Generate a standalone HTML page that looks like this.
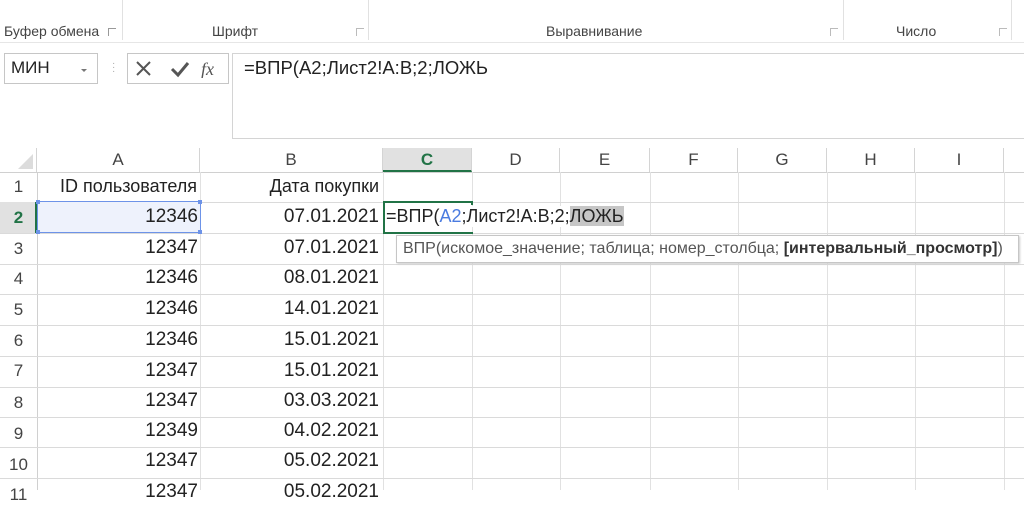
<!DOCTYPE html>
<html><head><meta charset="utf-8"><style>
body{margin:0;width:1024px;height:490px;overflow:hidden;background:#fff;font-family:"Segoe UI","Liberation Sans",sans-serif;position:relative}
.a{position:absolute}
.rib{color:#444;font-size:14px;top:23px}
.vl{position:absolute;width:1px;background:#e1e1e1}
.hl{position:absolute;height:1px;background:#dadada}
.ch{position:absolute;top:148px;height:24px;line-height:24px;text-align:center;font-size:17px;color:#444;border-right:1px solid #d4d4d4;box-sizing:border-box;background:#fff}
.rh{position:absolute;left:0;width:37px;text-align:center;font-size:17px;color:#444}
.c{position:absolute;font-size:19px;color:#222;text-align:right;white-space:nowrap}
</style></head><body>
<div class="a rib" style="left:4px">Буфер обмена</div>
<div class="a" style="left:108px;top:28px;width:7px;height:7px;border-left:1px solid #999;border-top:1px solid #999"></div>
<div class="vl" style="left:122px;top:0;height:40px"></div>
<div class="a rib" style="left:212px">Шрифт</div>
<div class="a" style="left:356px;top:28px;width:7px;height:7px;border-left:1px solid #bbb;border-top:1px solid #bbb"></div>
<div class="vl" style="left:368px;top:0;height:40px"></div>
<div class="a rib" style="left:546px">Выравнивание</div>
<div class="a" style="left:830px;top:28px;width:7px;height:7px;border-left:1px solid #bbb;border-top:1px solid #bbb"></div>
<div class="vl" style="left:843px;top:0;height:40px"></div>
<div class="a rib" style="left:896px">Число</div>
<div class="a" style="left:999px;top:28px;width:7px;height:7px;border-left:1px solid #bbb;border-top:1px solid #bbb"></div>
<div class="vl" style="left:1011px;top:0;height:40px"></div>
<div class="hl" style="left:0;top:42px;width:1024px;background:#e6e6e6"></div>
<div class="a" style="left:4px;top:53px;width:94px;height:31px;border:1px solid #c6c6c6;box-sizing:border-box"></div>
<div class="a" style="left:11px;top:58px;font-size:17px;color:#222">МИН</div>
<div class="a" style="left:81px;top:69px;border-left:3px solid transparent;border-right:3px solid transparent;border-top:3px solid #777"></div>
<div class="a" style="left:112px;top:62px;color:#aaa;font-size:10px;line-height:4px">·<br>·<br>·</div>
<div class="a" style="left:127px;top:53px;width:102px;height:31px;border:1px solid #c6c6c6;box-sizing:border-box"></div>
<svg class="a" style="left:135px;top:60px" width="90" height="18">
<path d="M2 2L15 15M15 2L2 15" stroke="#555" stroke-width="2"/>
<path d="M37 9L43 15L53 3" stroke="#555" stroke-width="3" fill="none"/>
<text x="66" y="15" font-family="Liberation Serif,serif" font-style="italic" font-size="18" fill="#555">fx</text>
</svg>
<div class="a" style="left:232px;top:53px;width:800px;height:86px;border:1px solid #d4d4d4;box-sizing:border-box"></div>
<div class="a" style="left:244px;top:57px;font-size:18.5px;color:#222">=ВПР(A2;Лист2!A:B;2;ЛОЖЬ</div>
<div class="a" style="left:0;top:148px;width:37px;height:24px;background:#fff;border-right:1px solid #d4d4d4;box-sizing:border-box"></div>
<div class="a" style="left:18px;top:154px;width:0;height:0;border-left:15px solid transparent;border-bottom:15px solid #dcdcdc"></div>
<div class="ch" style="left:37px;width:163px">A</div>
<div class="ch" style="left:200px;width:183px">B</div>
<div class="ch" style="left:383px;width:89px;background:#e1e1e1;color:#217346;font-weight:bold;border-bottom:2px solid #217346">C</div>
<div class="ch" style="left:472px;width:88px">D</div>
<div class="ch" style="left:560px;width:90px">E</div>
<div class="ch" style="left:650px;width:88px">F</div>
<div class="ch" style="left:738px;width:89px">G</div>
<div class="ch" style="left:827px;width:88px">H</div>
<div class="ch" style="left:915px;width:89px">I</div>
<div class="ch" style="left:1004px;width:30px"></div>
<div class="hl" style="left:0;top:172px;width:1024px;background:#d0d0d0"></div>
<div class="vl" style="left:37px;top:172px;height:318px;background:#d0d0d0"></div>
<div class="vl" style="left:200px;top:172px;height:318px"></div>
<div class="vl" style="left:383px;top:172px;height:318px"></div>
<div class="vl" style="left:472px;top:172px;height:318px"></div>
<div class="vl" style="left:560px;top:172px;height:318px"></div>
<div class="vl" style="left:650px;top:172px;height:318px"></div>
<div class="vl" style="left:738px;top:172px;height:318px"></div>
<div class="vl" style="left:827px;top:172px;height:318px"></div>
<div class="vl" style="left:915px;top:172px;height:318px"></div>
<div class="vl" style="left:1004px;top:172px;height:318px"></div>
<div class="hl" style="left:0;top:202px;width:1024px"></div>
<div class="hl" style="left:0;top:233px;width:1024px"></div>
<div class="hl" style="left:0;top:264px;width:1024px"></div>
<div class="hl" style="left:0;top:294px;width:1024px"></div>
<div class="hl" style="left:0;top:325px;width:1024px"></div>
<div class="hl" style="left:0;top:356px;width:1024px"></div>
<div class="hl" style="left:0;top:387px;width:1024px"></div>
<div class="hl" style="left:0;top:417px;width:1024px"></div>
<div class="hl" style="left:0;top:447px;width:1024px"></div>
<div class="hl" style="left:0;top:478px;width:1024px"></div>
<div class="a" style="left:0;top:202px;width:37px;height:31px;background:#e1e1e1;border-right:2px solid #217346;box-sizing:border-box"></div>
<div class="rh" style="top:177px">1</div>
<div class="rh" style="top:208px;color:#217346;font-weight:bold">2</div>
<div class="rh" style="top:239px">3</div>
<div class="rh" style="top:269px">4</div>
<div class="rh" style="top:300px">5</div>
<div class="rh" style="top:331px">6</div>
<div class="rh" style="top:361px">7</div>
<div class="rh" style="top:393px">8</div>
<div class="rh" style="top:424px">9</div>
<div class="rh" style="top:455px">10</div>
<div class="rh" style="top:485px">11</div>
<div class="a" style="left:37px;top:201px;width:164px;height:32px;background:#eef2fc;border:1px solid #6d93e8;box-sizing:border-box"></div>
<div class="a" style="left:36px;top:200px;width:4px;height:4px;background:#6d93e8"></div>
<div class="a" style="left:198px;top:200px;width:4px;height:4px;background:#6d93e8"></div>
<div class="a" style="left:36px;top:230px;width:4px;height:4px;background:#6d93e8"></div>
<div class="a" style="left:198px;top:230px;width:4px;height:4px;background:#6d93e8"></div>
<div class="c" style="right:827px;top:176px;font-size:18px">ID пользователя</div>
<div class="c" style="right:645px;top:176px;font-size:18px">Дата покупки</div>
<div class="c" style="right:826px;top:206px">12346</div>
<div class="c" style="right:645px;top:206px">07.01.2021</div>
<div class="c" style="right:826px;top:237px">12347</div><div class="c" style="right:645px;top:237px">07.01.2021</div>
<div class="c" style="right:826px;top:267px">12346</div><div class="c" style="right:645px;top:267px">08.01.2021</div>
<div class="c" style="right:826px;top:298px">12346</div><div class="c" style="right:645px;top:298px">14.01.2021</div>
<div class="c" style="right:826px;top:329px">12346</div><div class="c" style="right:645px;top:329px">15.01.2021</div>
<div class="c" style="right:826px;top:360px">12347</div><div class="c" style="right:645px;top:360px">15.01.2021</div>
<div class="c" style="right:826px;top:390px">12347</div><div class="c" style="right:645px;top:390px">03.03.2021</div>
<div class="c" style="right:826px;top:420px">12349</div><div class="c" style="right:645px;top:420px">04.02.2021</div>
<div class="c" style="right:826px;top:450px">12347</div><div class="c" style="right:645px;top:450px">05.02.2021</div>
<div class="c" style="right:826px;top:481px">12347</div><div class="c" style="right:645px;top:481px">05.02.2021</div>
<div class="a" style="left:383px;top:201px;width:90px;height:33px;border:2px solid #217346;box-sizing:border-box;border-right:none"></div>
<div class="a" style="left:471px;top:201px;width:2px;height:4px;background:#217346"></div>
<div class="a" style="left:386px;top:206px;font-size:18px;color:#222;white-space:nowrap;background:#fff;padding-right:2px">=ВПР(<span style="color:#4a7be0">A2</span>;Лист2!A:B;2;<span style="background:#c6c6c6">ЛОЖЬ</span></div>
<div class="a" style="left:396px;top:235px;width:623px;height:28px;border:1px solid #c6c6c6;background:#fff;box-shadow:1px 1px 2px #ccc;font-size:16px;color:#555;line-height:26px;padding-left:6px;box-sizing:border-box;white-space:nowrap">ВПР(искомое_значение; таблица; номер_столбца; <b style="color:#333">[интервальный_просмотр]</b>)</div>
</body></html>
